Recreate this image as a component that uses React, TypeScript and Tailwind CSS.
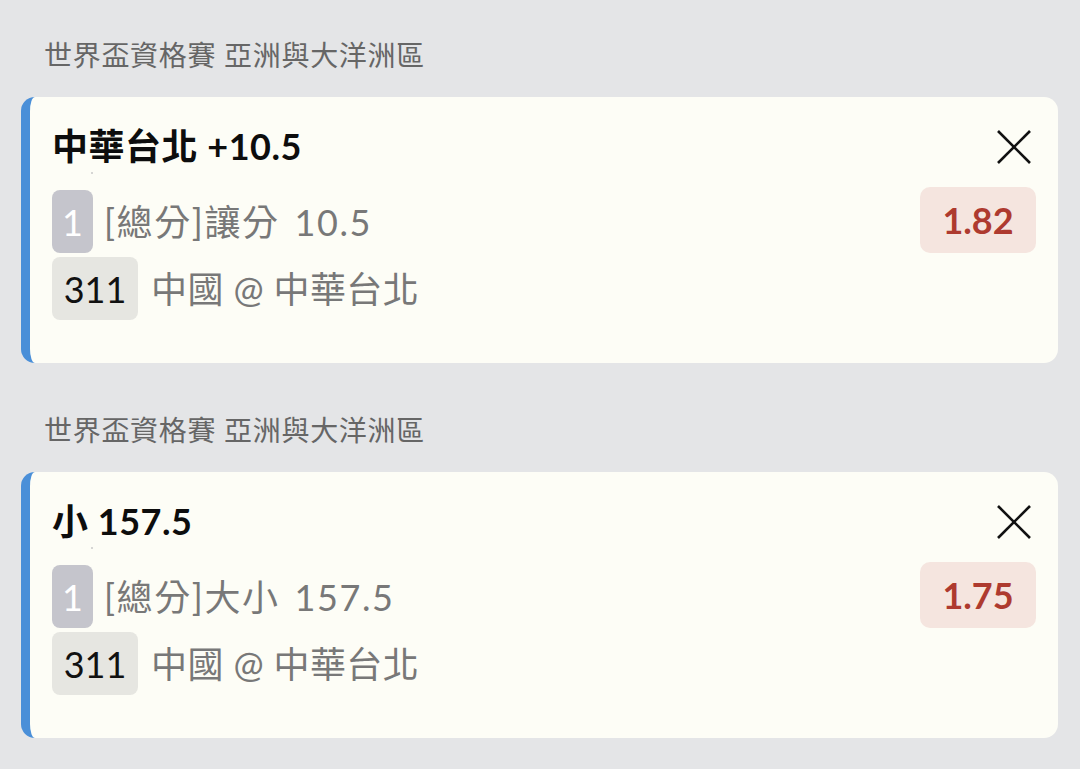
import React from "react";

type Bet = {
  title: string;
  market: string;
  odds: string;
};

const bets: Bet[] = [
  { title: "中華台北 +10.5", market: "[總分]讓分 10.5", odds: "1.82" },
  { title: "小 157.5", market: "[總分]大小 157.5", odds: "1.75" },
];

function CloseIcon() {
  return (
    <svg width="34" height="34" viewBox="0 0 34 34" className="block">
      <line x1="1" y1="1" x2="33" y2="33" stroke="#111" strokeWidth="2.6" />
      <line x1="33" y1="1" x2="1" y2="33" stroke="#111" strokeWidth="2.6" />
    </svg>
  );
}

function Card({ bet }: { bet: Bet }) {
  return (
    <div className="flex h-[266px] rounded-[14px] border-l-[9px] border-[#4a8fd8] bg-[#fdfdf6] pl-[22px] pr-[22px] pt-[27px]">
      <div className="flex flex-1 flex-col">
        <div className="relative text-[36px] font-bold leading-[44px] tracking-[0.5px] text-[#0d0d0d]">
          {bet.title}
          <span className="absolute left-[39px] top-[48px] h-[2px] w-[2px] rounded-full bg-[#c9c9c9]" />
        </div>
        <div className="mt-[22px] flex items-center">
          <div className="flex h-[63px] w-[41px] items-center justify-center rounded-[8px] bg-[#c5c5cc] text-[36px] text-white">
            1
          </div>
          <div className="ml-[11px] text-[36px] leading-[44px] tracking-[1.6px] [word-spacing:4px] text-[#787878]">
            {bet.market}
          </div>
        </div>
        <div className="mt-[4px] flex items-center">
          <div className="flex h-[63px] w-[86px] items-center justify-center rounded-[8px] bg-[#e6e6e1] text-[36px] text-[#111]">
            311
          </div>
          <div className="ml-[13px] text-[36px] leading-[44px] tracking-[0.4px] text-[#787878]">中國 @ 中華台北</div>
        </div>
      </div>
      <div className="flex flex-col items-end">
        <div className="mr-[5px] mt-[6px]">
          <CloseIcon />
        </div>
        <div className="mt-[23px] flex h-[66px] w-[116px] items-center justify-center rounded-[10px] bg-[#f5e5df] text-[36px] font-bold text-[#ae3a2f]">
          {bet.odds}
        </div>
      </div>
    </div>
  );
}

export default function App() {
  return (
    <div className="min-h-[769px] w-[1080px] bg-[#e4e5e7] pl-[21px] pr-[22px] pt-[35px] font-['Lato','Noto_Sans_CJK_TC',sans-serif]">
      {bets.map((bet, i) => (
        <div key={i} className={i > 0 ? "mt-[47px]" : ""}>
          <div className="mb-[22px] pl-[23px] text-[28px] leading-[40px] tracking-[0.7px] text-[#666]">
            世界盃資格賽 亞洲與大洋洲區
          </div>
          <Card bet={bet} />
        </div>
      ))}
    </div>
  );
}
